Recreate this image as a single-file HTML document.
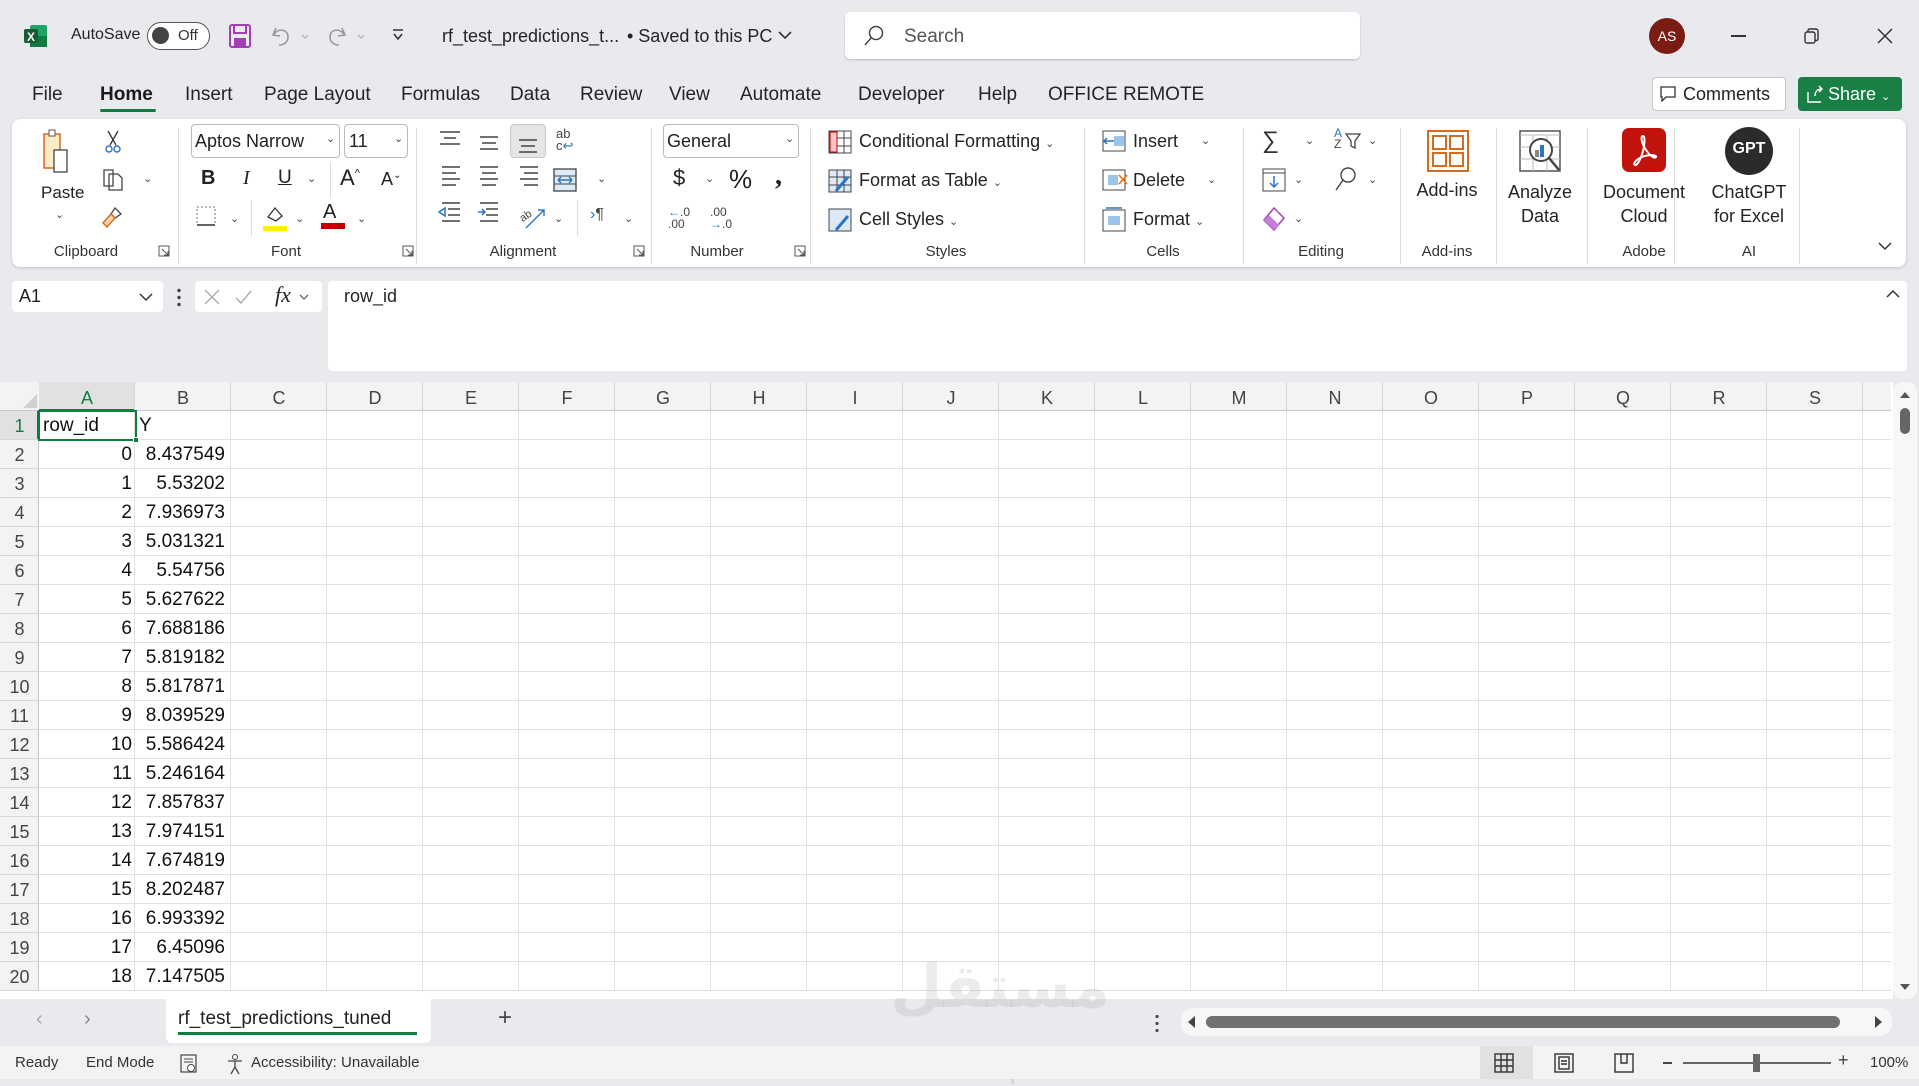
<!DOCTYPE html>
<html><head><meta charset="utf-8"><style>
*{box-sizing:border-box;margin:0;padding:0}
body{width:1919px;height:1079px;overflow:hidden;background:#e8eaee;font-family:"Liberation Sans",sans-serif;color:#222;position:relative}
.a{position:absolute;white-space:nowrap}
.t{font-size:18px;color:#242424}
.lbl{font-size:15px;color:#333;top:243px;transform:translateX(-50%)}
.sep{position:absolute;top:128px;width:1px;height:136px;background:#dcdcdc}
.chev{font-size:11px;color:#444}
.cell{position:absolute;font-size:19px;color:#111;height:29px;line-height:30px}
.rh{position:absolute;left:0;width:39px;text-align:center;font-size:18px;color:#444;height:29px;line-height:30px}
.ch{position:absolute;top:384px;height:27px;line-height:28px;width:96px;text-align:center;font-size:18px;color:#444}
</style></head><body>
<svg class="a" style="left:24px;top:24px" width="24" height="24"><rect x="6" y="1" width="17" height="22" rx="2" fill="#21a366"/><rect x="6" y="12" width="17" height="11" fill="#107c41"/><rect x="0" y="5" width="14" height="14" rx="2" fill="#185c37"/><text x="3" y="17" font-size="12" font-weight="bold" fill="#fff" font-family="Liberation Sans">X</text></svg>
<div class="a t" style="left:71px;top:26px;font-size:16px">AutoSave</div>
<div class="a" style="left:147px;top:22px;width:63px;height:28px;border:1.5px solid #555;border-radius:14px;background:#fff"><div class="a" style="left:4px;top:4px;width:17px;height:17px;border-radius:50%;background:#444"></div><div class="a" style="left:30px;top:4px;font-size:15px;color:#333">Off</div></div>
<svg class="a" style="left:229px;top:24px" width="22" height="24"><rect x="1" y="1" width="20" height="22" rx="2" fill="none" stroke="#a43fb5" stroke-width="2"/><rect x="5" y="1" width="12" height="8" fill="none" stroke="#a43fb5" stroke-width="2"/><rect x="5" y="14" width="12" height="9" fill="#a43fb5"/></svg>
<svg class="a" style="left:270px;top:24px" width="40" height="24"><path d="M6 4 L3 11 L10 12 M4 10 C8 4 18 5 18 13 C18 18 14 21 9 21" fill="none" stroke="#999" stroke-width="1.6"/><path d="M32 11l3 3 3-3" fill="none" stroke="#aaa" stroke-width="1.2"/></svg>
<svg class="a" style="left:326px;top:24px" width="40" height="24"><path d="M16 4 L19 11 L12 12 M18 10 C14 4 4 5 4 13 C4 18 8 21 13 21" fill="none" stroke="#999" stroke-width="1.6"/><path d="M32 11l3 3 3-3" fill="none" stroke="#aaa" stroke-width="1.2"/></svg>
<svg class="a" style="left:391px;top:28px" width="14" height="14"><path d="M2 2h10M3 6l4 5 4-5" fill="none" stroke="#333" stroke-width="1.6"/></svg>
<div class="a t" style="left:442px;top:26px">rf_test_predictions_t...</div>
<div class="a t" style="left:627px;top:26px">• Saved to this PC</div>
<svg class="a" style="left:777px;top:29px" width="16" height="12"><path d="M2 3l6 6 6-6" fill="none" stroke="#333" stroke-width="1.6"/></svg>
<div class="a" style="left:845px;top:12px;width:515px;height:47px;background:#fff;border-radius:5px;box-shadow:0 1px 2px rgba(0,0,0,.2)"></div>
<svg class="a" style="left:862px;top:24px" width="24" height="24"><circle cx="14" cy="9" r="6.5" fill="none" stroke="#444" stroke-width="1.5"/><path d="M9.5 13.5L3 21" stroke="#444" stroke-width="1.5"/></svg>
<div class="a" style="left:904px;top:26px;font-size:19px;color:#555">Search</div>
<div class="a" style="left:1649px;top:18px;width:36px;height:36px;border-radius:50%;background:#7b1c14;color:#fff;font-size:14px;text-align:center;line-height:36px">AS</div>
<div class="a" style="left:1731px;top:35px;width:15px;height:1.5px;background:#333"></div>
<svg class="a" style="left:1803px;top:27px" width="18" height="18"><rect x="2" y="5" width="10" height="11" rx="2" fill="none" stroke="#333" stroke-width="1.4"/><path d="M5 5V3.5a1.5 1.5 0 0 1 1.5-1.5H13a2 2 0 0 1 2 2v8a1.5 1.5 0 0 1-1.5 1.5H12" fill="none" stroke="#333" stroke-width="1.4"/></svg>
<svg class="a" style="left:1876px;top:27px" width="18" height="18"><path d="M2 2l14 14M16 2L2 16" stroke="#333" stroke-width="1.5"/></svg>
<div class="a" style="top:84px;font-size:19px;color:#242424;left:0;width:1300px;height:24px">
<span class="a" style="left:32px">File</span><span class="a" style="left:100px;font-weight:bold;color:#1b1b1b">Home</span><span class="a" style="left:185px">Insert</span><span class="a" style="left:264px">Page Layout</span><span class="a" style="left:401px">Formulas</span><span class="a" style="left:510px">Data</span><span class="a" style="left:580px">Review</span><span class="a" style="left:669px">View</span><span class="a" style="left:740px">Automate</span><span class="a" style="left:858px">Developer</span><span class="a" style="left:978px">Help</span><span class="a" style="left:1048px">OFFICE REMOTE</span></div>
<div class="a" style="left:100px;top:109px;width:56px;height:3px;background:#107c41;border-radius:2px"></div>
<div class="a" style="left:1652px;top:77px;width:134px;height:34px;background:#fff;border:1px solid #c8c8c8;border-radius:4px;font-size:18px;line-height:32px;padding-left:30px">Comments</div>
<svg class="a" style="left:1660px;top:86px" width="16" height="16"><path d="M1 1h14v10H6l-4 4V11H1z" fill="none" stroke="#333" stroke-width="1.3"/></svg>
<div class="a" style="left:1798px;top:77px;width:104px;height:34px;background:#1a7f45;border-radius:4px;color:#fff;font-size:18px;line-height:34px;padding-left:30px">Share <span style="font-size:11px">&#8964;</span></div>
<svg class="a" style="left:1806px;top:85px" width="18" height="18"><path d="M2 7v10h13M9 11c0-5 3-7 7-7M13 1l3 3-3 3" fill="none" stroke="#fff" stroke-width="1.4"/></svg>
<div class="a" style="left:12px;top:119px;width:1894px;height:148px;background:#fff;border-radius:8px;box-shadow:0 1px 3px rgba(0,0,0,.18)"></div>
<div class="sep" style="left:178px"></div><div class="sep" style="left:416px"></div><div class="sep" style="left:651px"></div><div class="sep" style="left:810px"></div><div class="sep" style="left:1084px"></div><div class="sep" style="left:1243px"></div><div class="sep" style="left:1400px"></div><div class="sep" style="left:1496px"></div><div class="sep" style="left:1587px"></div><div class="sep" style="left:1674px"></div><div class="sep" style="left:1799px"></div>
<div class="a lbl" style="left:86px">Clipboard</div><div class="a lbl" style="left:286px">Font</div><div class="a lbl" style="left:523px">Alignment</div><div class="a lbl" style="left:717px">Number</div><div class="a lbl" style="left:946px">Styles</div><div class="a lbl" style="left:1163px">Cells</div><div class="a lbl" style="left:1321px">Editing</div><div class="a lbl" style="left:1447px">Add-ins</div><div class="a lbl" style="left:1644px">Adobe</div><div class="a lbl" style="left:1749px">AI</div>
<svg class="a" style="left:158px;top:245px" width="12" height="12"><path d="M1 1h10v10H1z M4 4l6 6M10 6v4H6" fill="none" stroke="#555" stroke-width="1"/></svg>
<svg class="a" style="left:402px;top:245px" width="12" height="12"><path d="M1 1h10v10H1z M4 4l6 6M10 6v4H6" fill="none" stroke="#555" stroke-width="1"/></svg>
<svg class="a" style="left:633px;top:245px" width="12" height="12"><path d="M1 1h10v10H1z M4 4l6 6M10 6v4H6" fill="none" stroke="#555" stroke-width="1"/></svg>
<svg class="a" style="left:794px;top:245px" width="12" height="12"><path d="M1 1h10v10H1z M4 4l6 6M10 6v4H6" fill="none" stroke="#555" stroke-width="1"/></svg>
<svg class="a" style="left:42px;top:128px" width="26" height="46"><rect x="2" y="6" width="16" height="34" fill="#fcebc4" stroke="#d46b1e" stroke-width="1.5"/><rect x="7" y="2" width="6" height="6" fill="#fff" stroke="#555"/><rect x="12" y="22" width="13" height="22" fill="#fff" stroke="#444" stroke-width="1.3"/></svg>
<div class="a t" style="left:41px;top:183px;font-size:17px">Paste</div>
<div class="a chev" style="left:55px;top:208px">&#8964;</div>
<svg class="a" style="left:104px;top:130px" width="18" height="24"><path d="M4 1l8 14M14 1L6 15" stroke="#333" stroke-width="1.3"/><circle cx="5" cy="19" r="3" fill="none" stroke="#2b73c4" stroke-width="1.4"/><circle cx="13" cy="19" r="3" fill="none" stroke="#2b73c4" stroke-width="1.4"/></svg>
<svg class="a" style="left:102px;top:168px" width="22" height="24"><path d="M2 2h9v16H2z M7 6h9l4 4v12H7z" fill="#fff" stroke="#444" stroke-width="1.3"/></svg>
<div class="a chev" style="left:143px;top:172px">&#8964;</div>
<svg class="a" style="left:101px;top:205px" width="24" height="24"><path d="M14 3l6 6-6 4-4-4z" fill="none" stroke="#444" stroke-width="1.3"/><path d="M10 9l-8 9 4 4 8-9z" fill="#fcd5b0" stroke="#d46b1e" stroke-width="1.4"/></svg>
<div class="a" style="left:191px;top:124px;width:149px;height:34px;border:1px solid #bbb;border-radius:4px;font-size:18px;line-height:32px;padding-left:3px">Aptos Narrow</div>
<div class="a chev" style="left:326px;top:132px">&#8964;</div>
<div class="a" style="left:344px;top:124px;width:64px;height:34px;border:1px solid #bbb;border-radius:4px;font-size:18px;line-height:32px;padding-left:4px">11</div>
<div class="a chev" style="left:394px;top:132px">&#8964;</div>
<div class="a" style="left:201px;top:167px;font-size:20px;font-weight:bold">B</div>
<div class="a" style="left:243px;top:167px;font-size:20px;font-style:italic;font-family:'Liberation Serif'">I</div>
<div class="a" style="left:278px;top:167px;font-size:19px;text-decoration:underline">U</div>
<div class="a chev" style="left:307px;top:172px">&#8964;</div>
<div class="sep" style="left:330px;top:162px;height:36px"></div>
<div class="a" style="left:340px;top:165px;font-size:22px">A<sup style="font-size:11px">^</sup></div>
<div class="a" style="left:381px;top:169px;font-size:18px">A<sup style="font-size:10px">&#8964;</sup></div>
<svg class="a" style="left:196px;top:206px" width="20" height="20"><rect x="1" y="1" width="18" height="18" fill="none" stroke="#777" stroke-dasharray="2 2"/><path d="M1 19h18" stroke="#333" stroke-width="1.5"/></svg>
<div class="a chev" style="left:230px;top:212px">&#8964;</div>
<div class="sep" style="left:251px;top:200px;height:36px"></div>
<svg class="a" style="left:262px;top:204px" width="26" height="28"><path d="M6 13l7-9 7 8-6 5z" fill="none" stroke="#333" stroke-width="1.3"/><rect x="1" y="22" width="24" height="5" fill="#ffef00"/></svg>
<div class="a chev" style="left:295px;top:212px">&#8964;</div>
<div class="a" style="left:323px;top:201px;font-size:20px">A</div>
<div class="a" style="left:321px;top:223px;width:24px;height:6px;background:#c00000"></div>
<div class="a chev" style="left:357px;top:212px">&#8964;</div>
<svg class="a" style="left:436px;top:128px" width="240" height="110" fill="none" stroke="#444" stroke-width="1.5">
<path d="M4 4h20M8 10h12M4 16h20"/><path d="M44 9h18M46 15h14M44 21h18"/>
<path d="M6 3h18M6 9h14M6 15h18 M6 21h14" transform="translate(0,36)"/><path d="M44 39h18M46 45h14M44 51h18M46 57h14"/><path d="M84 39h18M88 45h14M84 51h18M88 57h14"/>
<path d="M6 75h18M12 81h12M12 87h12M6 93h18"/><path d="M3 84l6-4v8z" stroke="#2b73c4"/>
<path d="M44 75h18M50 81h12M50 87h12M44 93h18"/><path d="M42 84h7M46 81l3 3-3 3" stroke="#2b73c4"/>
</svg>
<div class="a" style="left:510px;top:124px;width:36px;height:34px;background:#e5e5e5;border:1px solid #c8c8c8;border-radius:4px"></div>
<svg class="a" style="left:517px;top:130px" width="22" height="24" fill="none" stroke="#444" stroke-width="1.5"><path d="M2 10h18M4 16h14M2 22h18"/></svg>
<div class="a" style="left:556px;top:128px;font-size:13px;line-height:12px;color:#444">ab<br>c<span style="color:#2b73c4">&#8617;</span></div>
<svg class="a" style="left:553px;top:168px" width="24" height="24"><rect x="1" y="1" width="22" height="22" fill="#dceaf8" stroke="#444" stroke-width="1.3"/><path d="M1 8h22M1 16h22" stroke="#444"/><path d="M5 12h14M5 12l3-3M5 12l3 3M19 12l-3-3M19 12l-3 3" stroke="#2b73c4" stroke-width="1.4"/></svg>
<div class="a chev" style="left:597px;top:172px">&#8964;</div>
<svg class="a" style="left:520px;top:204px" width="30" height="26"><text x="0" y="14" font-size="11" fill="#444" font-family="Liberation Sans" transform="rotate(-35 8 12)">ab</text><path d="M6 24L24 6M18 6h6v6" fill="none" stroke="#2b73c4" stroke-width="1.4"/></svg>
<div class="a chev" style="left:554px;top:212px">&#8964;</div>
<div class="sep" style="left:577px;top:200px;height:36px"></div>
<div class="a" style="left:590px;top:206px;font-size:16px;color:#444"><span style="color:#2b73c4">&#8250;</span>¶</div>
<div class="a chev" style="left:624px;top:212px">&#8964;</div>
<div class="a" style="left:663px;top:124px;width:136px;height:34px;border:1px solid #bbb;border-radius:4px;font-size:18px;line-height:32px;padding-left:3px">General</div>
<div class="a chev" style="left:785px;top:132px">&#8964;</div>
<div class="a" style="left:673px;top:165px;font-size:22px">$</div>
<div class="a chev" style="left:705px;top:172px">&#8964;</div>
<div class="a" style="left:729px;top:164px;font-size:26px">%</div>
<div class="a" style="left:775px;top:160px;font-size:28px;font-weight:bold;font-family:'Liberation Serif'">,</div>
<div class="a" style="left:668px;top:206px;font-size:12px;line-height:12px;color:#444"><span style="color:#2b73c4">&#8592;</span>.0<br>.00</div>
<div class="a" style="left:710px;top:206px;font-size:12px;line-height:12px;color:#444">.00<br><span style="color:#2b73c4">&#8594;</span>.0</div>
<svg class="a" style="left:828px;top:130px" width="24" height="24"><rect x="1" y="1" width="22" height="22" fill="#fff" stroke="#444"/><path d="M1 8h22M1 16h22M9 1v22M16 1v22" stroke="#444"/><rect x="2" y="2" width="7" height="20" fill="#f4c6c6" stroke="#c00" /></svg>
<div class="a t" style="left:859px;top:131px">Conditional Formatting <span class="chev">&#8964;</span></div>
<svg class="a" style="left:828px;top:169px" width="24" height="24"><rect x="1" y="1" width="22" height="22" fill="#dceaf8" stroke="#444"/><path d="M1 8h22M1 16h22M9 1v22M16 1v22" stroke="#444"/><path d="M8 22l12-14" stroke="#2b73c4" stroke-width="3"/></svg>
<div class="a t" style="left:859px;top:170px">Format as Table <span class="chev">&#8964;</span></div>
<svg class="a" style="left:828px;top:208px" width="24" height="24"><rect x="1" y="1" width="22" height="22" fill="#dceaf8" stroke="#444"/><path d="M8 22l12-14" stroke="#2b73c4" stroke-width="3"/></svg>
<div class="a t" style="left:859px;top:209px">Cell Styles <span class="chev">&#8964;</span></div>
<svg class="a" style="left:1102px;top:130px" width="24" height="22"><rect x="1" y="1" width="22" height="20" fill="#fff" stroke="#444"/><rect x="12" y="6" width="10" height="10" fill="#9cc3e8"/><path d="M12 11H2M5 8l-3 3 3 3" stroke="#2b73c4" stroke-width="1.5" fill="none"/></svg>
<div class="a t" style="left:1133px;top:131px">Insert</div><div class="a chev" style="left:1201px;top:134px">&#8964;</div>
<svg class="a" style="left:1102px;top:169px" width="26" height="22"><rect x="1" y="1" width="22" height="20" fill="#fff" stroke="#444"/><rect x="6" y="6" width="10" height="10" fill="#9cc3e8"/><path d="M17 6l8 9M25 6l-8 9" stroke="#e8700a" stroke-width="1.6"/></svg>
<div class="a t" style="left:1133px;top:170px">Delete</div><div class="a chev" style="left:1207px;top:173px">&#8964;</div>
<svg class="a" style="left:1102px;top:206px" width="24" height="26"><rect x="1" y="4" width="22" height="21" fill="#fff" stroke="#444"/><rect x="6" y="10" width="12" height="9" fill="#9cc3e8"/><path d="M4 2h16" stroke="#2b73c4" stroke-width="1.5"/></svg>
<div class="a t" style="left:1133px;top:209px">Format <span class="chev">&#8964;</span></div>
<div class="a" style="left:1262px;top:127px;font-size:24px;color:#333">&#8721;</div><div class="a chev" style="left:1305px;top:134px">&#8964;</div>
<div class="a" style="left:1334px;top:128px;font-size:12px;line-height:11px;color:#444"><span style="color:#2b73c4">A</span><br>Z</div>
<svg class="a" style="left:1345px;top:133px" width="16" height="16"><path d="M1 1h14l-5 7v7l-4-2V8z" fill="none" stroke="#444" stroke-width="1.3"/></svg>
<div class="a chev" style="left:1368px;top:134px">&#8964;</div>
<svg class="a" style="left:1262px;top:168px" width="24" height="24"><rect x="1" y="1" width="22" height="22" fill="#fff" stroke="#444"/><path d="M1 5h22" stroke="#444"/><path d="M12 8v11M8 15l4 4 4-4" stroke="#2b73c4" stroke-width="1.5" fill="none"/></svg>
<div class="a chev" style="left:1294px;top:173px">&#8964;</div>
<svg class="a" style="left:1334px;top:166px" width="24" height="26"><circle cx="14" cy="9" r="7" fill="none" stroke="#444" stroke-width="1.4"/><path d="M9 14L2 24" stroke="#444" stroke-width="1.4"/></svg>
<div class="a chev" style="left:1368px;top:173px">&#8964;</div>
<svg class="a" style="left:1262px;top:206px" width="24" height="26"><path d="M12 2l10 10-10 12-10-10z" fill="#fff" stroke="#a43fb5" stroke-width="1.5"/><path d="M7 9l10 10-5 5-10-10z" fill="#c57fd4"/></svg>
<div class="a chev" style="left:1294px;top:212px">&#8964;</div>
<svg class="a" style="left:1427px;top:130px" width="42" height="42"><rect x="1" y="1" width="40" height="40" fill="#fff" stroke="#d46b1e" stroke-width="2"/><rect x="6" y="6" width="13" height="13" fill="none" stroke="#d46b1e" stroke-width="2"/><rect x="23" y="6" width="13" height="13" fill="none" stroke="#d46b1e" stroke-width="2"/><rect x="6" y="23" width="13" height="13" fill="none" stroke="#d46b1e" stroke-width="2"/><rect x="23" y="23" width="13" height="13" fill="none" stroke="#d46b1e" stroke-width="2"/></svg>
<div class="a t" style="left:1447px;top:180px;transform:translateX(-50%)">Add-ins</div>
<svg class="a" style="left:1519px;top:130px" width="44" height="44"><rect x="1" y="1" width="40" height="40" fill="#fff" stroke="#555" stroke-width="1.5"/><path d="M1 5h40M1 17h40M1 29h40M14 5v36M28 5v36" stroke="#bbb"/><circle cx="22" cy="20" r="11" fill="#fff" stroke="#444" stroke-width="2"/><rect x="16" y="20" width="4" height="7" fill="#888"/><rect x="21" y="15" width="4" height="12" fill="#2b73c4"/><path d="M30 28l10 12" stroke="#444" stroke-width="2.5"/></svg>
<div class="a t" style="left:1540px;top:180px;transform:translateX(-50%);text-align:center;line-height:24px">Analyze<br>Data</div>
<div class="a" style="left:1622px;top:128px;width:44px;height:44px;border-radius:7px;background:#c1130b"></div>
<svg class="a" style="left:1630px;top:134px" width="28" height="32"><path d="M13 2c-3 0-1 8 3 14s9 9 10 7-7-3-14 0-9 7-7 8 6-6 8-14S15 2 13 2z" fill="none" stroke="#fff" stroke-width="2"/></svg>
<div class="a t" style="left:1644px;top:180px;transform:translateX(-50%);text-align:center;line-height:24px">Document<br>Cloud</div>
<div class="a" style="left:1725px;top:127px;width:48px;height:48px;border-radius:50%;background:#2b2b2b;color:#fff;font-weight:bold;font-size:16px;text-align:center;line-height:44px">GPT</div>
<div class="a t" style="left:1749px;top:180px;transform:translateX(-50%);text-align:center;line-height:24px">ChatGPT<br>for Excel</div>
<svg class="a" style="left:1877px;top:240px" width="16" height="12"><path d="M2 3l6 6 6-6" fill="none" stroke="#333" stroke-width="1.5"/></svg>
<div class="a" style="left:12px;top:281px;width:151px;height:31px;background:#fff;border-radius:4px;font-size:18px;line-height:31px;padding-left:7px">A1</div>
<svg class="a" style="left:138px;top:291px" width="16" height="12"><path d="M2 3l6 6 6-6" fill="none" stroke="#333" stroke-width="1.5"/></svg>
<div class="a" style="left:177px;top:287px;width:4px;height:20px;background:radial-gradient(circle,#444 1.5px,transparent 2px) 0 0/4px 7px"></div>
<div class="a" style="left:195px;top:281px;width:127px;height:31px;background:#fff;border-radius:4px"></div>
<svg class="a" style="left:203px;top:288px" width="110" height="20"><path d="M2 2l14 14M16 2L2 16" stroke="#aaa" stroke-width="1.4"/><path d="M33 10l5 5 10-12" fill="none" stroke="#aaa" stroke-width="1.4"/><path d="M97 7l4 4 4-4" fill="none" stroke="#666" stroke-width="1.3"/></svg>
<div class="a" style="left:275px;top:282px;font-size:22px;font-style:italic;font-family:'Liberation Serif'">fx</div>
<div class="a" style="left:328px;top:281px;width:1579px;height:90px;background:#fff;border-radius:4px"></div>
<div class="a t" style="left:344px;top:286px">row_id</div>
<svg class="a" style="left:1885px;top:288px" width="16" height="12"><path d="M2 9l6-6 6 6" fill="none" stroke="#333" stroke-width="1.5"/></svg>
<div class="a" style="left:0;top:382px;width:1893px;height:617px;background:#fff"></div>
<div class="a" style="left:0;top:382px;width:1891px;height:29px;background:#f3f3f3;border-bottom:1px solid #c8c8c8"></div>
<div class="a" style="left:0;top:411px;width:39px;height:580px;background:#f3f3f3;border-right:1px solid #c8c8c8"></div>
<div class="a" style="left:39px;top:382px;width:96px;height:29px;background:#e1e1e1;border-bottom:2px solid #107c41"></div>
<div class="a" style="left:0;top:411px;width:39px;height:29px;background:#e1e1e1;border-right:2px solid #107c41"></div>
<svg class="a" style="left:22px;top:393px" width="16" height="16"><path d="M15 1v14H1z" fill="#d0d0d0"/></svg>
<div class="a" style="left:39px;top:411px;width:1852px;height:580px;background:repeating-linear-gradient(90deg,transparent 0 95px,#e1e1e1 95px 96px),repeating-linear-gradient(180deg,transparent 0 28px,#e1e1e1 28px 29px)"></div>
<div class="a" style="left:39px;top:382px;width:1852px;height:29px;background:repeating-linear-gradient(90deg,transparent 0 95px,#d6d6d6 95px 96px)"></div>
<div class="a" style="left:0;top:411px;width:39px;height:580px;background:repeating-linear-gradient(180deg,transparent 0 28px,#d6d6d6 28px 29px)"></div>
<div class="ch" style="left:39px;color:#107c41">A</div><div class="ch" style="left:135px">B</div><div class="ch" style="left:231px">C</div><div class="ch" style="left:327px">D</div><div class="ch" style="left:423px">E</div><div class="ch" style="left:519px">F</div><div class="ch" style="left:615px">G</div><div class="ch" style="left:711px">H</div><div class="ch" style="left:807px">I</div><div class="ch" style="left:903px">J</div><div class="ch" style="left:999px">K</div><div class="ch" style="left:1095px">L</div><div class="ch" style="left:1191px">M</div><div class="ch" style="left:1287px">N</div><div class="ch" style="left:1383px">O</div><div class="ch" style="left:1479px">P</div><div class="ch" style="left:1575px">Q</div><div class="ch" style="left:1671px">R</div><div class="ch" style="left:1767px">S</div>
<div class="rh" style="top:411px;color:#107c41">1</div><div class="rh" style="top:440px">2</div><div class="rh" style="top:469px">3</div><div class="rh" style="top:498px">4</div><div class="rh" style="top:527px">5</div><div class="rh" style="top:556px">6</div><div class="rh" style="top:585px">7</div><div class="rh" style="top:614px">8</div><div class="rh" style="top:643px">9</div><div class="rh" style="top:672px">10</div><div class="rh" style="top:701px">11</div><div class="rh" style="top:730px">12</div><div class="rh" style="top:759px">13</div><div class="rh" style="top:788px">14</div><div class="rh" style="top:817px">15</div><div class="rh" style="top:846px">16</div><div class="rh" style="top:875px">17</div><div class="rh" style="top:904px">18</div><div class="rh" style="top:933px">19</div><div class="rh" style="top:962px">20</div>
<div class="cell" style="left:43px;top:411px">row_id</div><div class="cell" style="left:139px;top:411px">Y</div>
<div class="a" style="left:38px;top:410px;width:99px;height:31px;border:2px solid #107c41"></div>
<div class="a" style="left:133px;top:437px;width:6px;height:6px;background:#107c41;border:1px solid #fff"></div>
<div class="a" style="left:39px;top:440px;width:189px">
<div style="position:relative;font-size:19px;line-height:29px;color:#111">
<div style="display:flex"><span style="width:93px;text-align:right">0</span><span style="width:93px;text-align:right">8.437549</span></div>
<div style="display:flex"><span style="width:93px;text-align:right">1</span><span style="width:93px;text-align:right">5.53202</span></div>
<div style="display:flex"><span style="width:93px;text-align:right">2</span><span style="width:93px;text-align:right">7.936973</span></div>
<div style="display:flex"><span style="width:93px;text-align:right">3</span><span style="width:93px;text-align:right">5.031321</span></div>
<div style="display:flex"><span style="width:93px;text-align:right">4</span><span style="width:93px;text-align:right">5.54756</span></div>
<div style="display:flex"><span style="width:93px;text-align:right">5</span><span style="width:93px;text-align:right">5.627622</span></div>
<div style="display:flex"><span style="width:93px;text-align:right">6</span><span style="width:93px;text-align:right">7.688186</span></div>
<div style="display:flex"><span style="width:93px;text-align:right">7</span><span style="width:93px;text-align:right">5.819182</span></div>
<div style="display:flex"><span style="width:93px;text-align:right">8</span><span style="width:93px;text-align:right">5.817871</span></div>
<div style="display:flex"><span style="width:93px;text-align:right">9</span><span style="width:93px;text-align:right">8.039529</span></div>
<div style="display:flex"><span style="width:93px;text-align:right">10</span><span style="width:93px;text-align:right">5.586424</span></div>
<div style="display:flex"><span style="width:93px;text-align:right">11</span><span style="width:93px;text-align:right">5.246164</span></div>
<div style="display:flex"><span style="width:93px;text-align:right">12</span><span style="width:93px;text-align:right">7.857837</span></div>
<div style="display:flex"><span style="width:93px;text-align:right">13</span><span style="width:93px;text-align:right">7.974151</span></div>
<div style="display:flex"><span style="width:93px;text-align:right">14</span><span style="width:93px;text-align:right">7.674819</span></div>
<div style="display:flex"><span style="width:93px;text-align:right">15</span><span style="width:93px;text-align:right">8.202487</span></div>
<div style="display:flex"><span style="width:93px;text-align:right">16</span><span style="width:93px;text-align:right">6.993392</span></div>
<div style="display:flex"><span style="width:93px;text-align:right">17</span><span style="width:93px;text-align:right">6.45096</span></div>
<div style="display:flex"><span style="width:93px;text-align:right">18</span><span style="width:93px;text-align:right">7.147505</span></div>
</div></div>
<div class="a" style="left:1893px;top:382px;width:24px;height:617px;background:#f7f7f7;border-radius:10px"></div>
<svg class="a" style="left:1898px;top:390px" width="14" height="10"><path d="M2 8l5-6 5 6z" fill="#555"/></svg>
<div class="a" style="left:1900px;top:408px;width:10px;height:26px;background:#666;border-radius:5px"></div>
<svg class="a" style="left:1898px;top:982px" width="14" height="10"><path d="M2 2l5 6 5-6z" fill="#555"/></svg>
<div class="a" style="left:36px;top:1008px;font-size:20px;color:#aaa">&#8249;</div>
<div class="a" style="left:84px;top:1008px;font-size:20px;color:#888">&#8250;</div>
<div class="a" style="left:166px;top:999px;width:265px;height:44px;background:#fff;border-radius:0 0 6px 6px"></div>
<div class="a" style="left:178px;top:1008px;font-size:19px;color:#222">rf_test_predictions_tuned</div>
<div class="a" style="left:178px;top:1032px;width:239px;height:3px;background:#107c41"></div>
<div class="a" style="left:498px;top:1004px;font-size:24px;color:#444">+</div>
<div class="a" style="left:1155px;top:1013px;width:4px;height:20px;background:radial-gradient(circle,#444 1.4px,transparent 1.8px) 0 0/4px 7px"></div>
<div class="a" style="left:1181px;top:1008px;width:711px;height:28px;background:#f7f7f7;border-radius:12px"></div>
<svg class="a" style="left:1186px;top:1015px" width="12" height="14"><path d="M9 1L2 7l7 6z" fill="#444"/></svg>
<div class="a" style="left:1206px;top:1016px;width:634px;height:12px;background:#717171;border-radius:6px"></div>
<svg class="a" style="left:1872px;top:1015px" width="12" height="14"><path d="M3 1l7 6-7 6z" fill="#444"/></svg>
<div class="a" style="left:1000px;top:1043px;font-size:38px;color:rgba(150,150,150,.22);transform:translateX(-50%)">mostaql.com</div>
<div class="a" style="left:1000px;top:952px;font-size:60px;font-weight:bold;color:rgba(150,150,150,.18);transform:translateX(-50%);font-family:'Liberation Sans','DejaVu Sans',sans-serif">مستقل</div>
<div class="a" style="left:0;top:1046px;width:1919px;height:33px;background:#f3f3f3"></div>
<div class="a" style="left:15px;top:1054px;font-size:15px;color:#333">Ready</div>
<div class="a" style="left:86px;top:1054px;font-size:15px;color:#333">End Mode</div>
<svg class="a" style="left:180px;top:1054px" width="20" height="20"><rect x="1" y="1" width="15" height="17" fill="none" stroke="#444" stroke-width="1.2"/><path d="M4 5h9M4 8h9" stroke="#444"/><circle cx="11" cy="14" r="3.5" fill="#fff" stroke="#444"/></svg>
<svg class="a" style="left:226px;top:1053px" width="22" height="22"><circle cx="9" cy="4" r="2.5" fill="none" stroke="#444"/><path d="M2 8h14M9 8v6l-4 7M9 14l4 7" fill="none" stroke="#444" stroke-width="1.3"/></svg>
<div class="a" style="left:251px;top:1054px;font-size:15px;color:#333">Accessibility: Unavailable</div>
<div class="a" style="left:1480px;top:1046px;width:53px;height:33px;background:#e1e1e1"></div>
<svg class="a" style="left:1494px;top:1053px" width="20" height="20" fill="none" stroke="#333" stroke-width="1.4"><rect x="1" y="1" width="18" height="18"/><path d="M1 7h18M1 13h18M7 1v18M13 1v18"/></svg>
<svg class="a" style="left:1554px;top:1053px" width="20" height="20" fill="none" stroke="#333" stroke-width="1.4"><rect x="1" y="1" width="18" height="18"/><rect x="5" y="4" width="10" height="12"/><path d="M7 8h6M7 11h6"/></svg>
<svg class="a" style="left:1614px;top:1053px" width="20" height="20" fill="none" stroke="#333" stroke-width="1.4"><rect x="1" y="1" width="18" height="18"/><path d="M7 1v9h6V1"/></svg>
<div class="a" style="left:1663px;top:1062px;width:9px;height:1.5px;background:#444"></div>
<div class="a" style="left:1683px;top:1062px;width:148px;height:2px;background:#666"></div>
<div class="a" style="left:1753px;top:1054px;width:7px;height:18px;background:#666"></div>
<div class="a" style="left:1838px;top:1050px;font-size:18px;color:#444">+</div>
<div class="a" style="left:1870px;top:1054px;font-size:15px;color:#333">100%</div>
</body></html>
